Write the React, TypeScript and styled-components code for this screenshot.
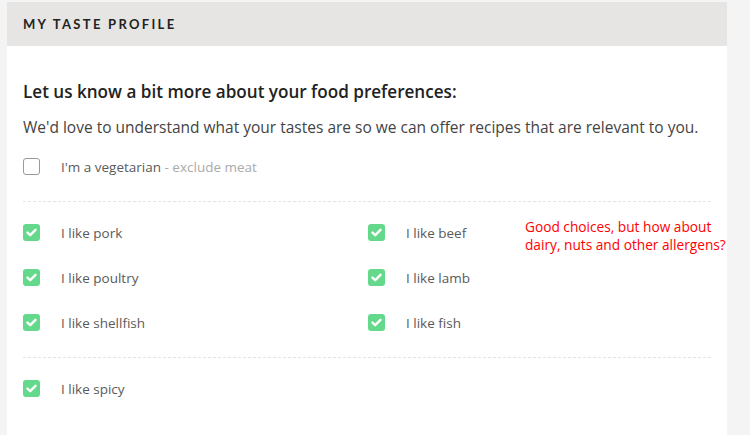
import styled, { createGlobalStyle } from "styled-components";

const GlobalStyle = createGlobalStyle`
  html, body {
    margin: 0;
    padding: 0;
    background: #f4f4f4;
  }
  body {
    font-family: "Open Sans", Lato, sans-serif;
    -webkit-font-smoothing: antialiased;
  }
`;

const Page = styled.div`
  position: relative;
  width: 750px;
  height: 435px;
  overflow: hidden;
  padding: 2px 0 0 7px;
  box-sizing: border-box;
`;

const Card = styled.section`
  width: 720px;
  background: #fff;
  min-height: 440px;
`;

const Header = styled.div`
  height: 44px;
  background: #e6e5e3;
  display: flex;
  align-items: center;
  padding: 0 16px;
`;

const HeaderTitle = styled.h2`
  margin: 0;
  font-family: Lato, sans-serif;
  font-size: 13px;
  font-weight: 700;
  letter-spacing: 2.3px;
  color: #222;
  text-transform: uppercase;
`;

const Body = styled.div`
  padding: 34px 16px 0;
`;

const Heading = styled.h3`
  margin: 0;
  font-size: 17.1px;
  line-height: 24px;
  font-weight: 600;
  color: #222;
`;

const Intro = styled.p`
  margin: 12px 0 0;
  font-size: 15.5px;
  line-height: 22px;
  color: #444;
`;

const Section = styled.div<{ $top?: number }>`
  display: grid;
  grid-template-columns: 345px 1fr;
  padding: ${(p) => p.$top ?? 8}px 0 12px;
  border-bottom: 1px dashed #e4e4e4;
  &:last-child {
    border-bottom: none;
  }
`;

const Option = styled.label`
  height: 45px;
  display: flex;
  align-items: center;
  gap: 21px;
  font-size: 13.5px;
  color: #5a5a5a;
`;

const Box = styled.span<{ $checked: boolean }>`
  width: 17px;
  height: 17px;
  box-sizing: border-box;
  border-radius: 3px;
  display: flex;
  align-items: center;
  justify-content: center;
  flex-shrink: 0;
  background: ${(p) => (p.$checked ? "#64d98b" : "#fff")};
  border: ${(p) => (p.$checked ? "none" : "1px solid #9a9a9a")};
`;

const Hint = styled.span`
  color: #aaa;
`;

const Note = styled.div`
  position: absolute;
  left: 525px;
  top: 218px;
  font-family: "Open Sans", sans-serif;
  font-size: 13.7px;
  line-height: 18px;
  color: #ff0000;
`;

function Check({ checked }: { checked: boolean }) {
  return (
    <Box $checked={checked}>
      {checked && (
        <svg width="11" height="9" viewBox="0 0 11 9">
          <path
            d="M1.5 4.6 L4.2 7.2 L9.5 1.8"
            fill="none"
            stroke="#fff"
            strokeWidth="2.4"
            strokeLinecap="round"
            strokeLinejoin="round"
          />
        </svg>
      )}
    </Box>
  );
}

const meats = ["pork", "beef", "poultry", "lamb", "shellfish", "fish"];

export default function App() {
  return (
    <Page>
      <GlobalStyle />
      <Card>
        <Header>
          <HeaderTitle>My taste profile</HeaderTitle>
        </Header>
        <Body>
          <Heading>Let us know a bit more about your food preferences:</Heading>
          <Intro>
            We'd love to understand what your tastes are so we can offer recipes
            that are relevant to you.
          </Intro>
          <Section $top={6}>
            <Option>
              <Check checked={false} />
              <span>
                I'm a vegetarian <Hint>- exclude meat</Hint>
              </span>
            </Option>
          </Section>
          <Section>
            {meats.map((m) => (
              <Option key={m}>
                <Check checked />
                <span>I like {m}</span>
              </Option>
            ))}
          </Section>
          <Section>
            <Option>
              <Check checked />
              <span>I like spicy</span>
            </Option>
          </Section>
        </Body>
      </Card>
      <Note>
        Good choices, but how about
        <br />
        dairy, nuts and other allergens?
      </Note>
    </Page>
  );
}
